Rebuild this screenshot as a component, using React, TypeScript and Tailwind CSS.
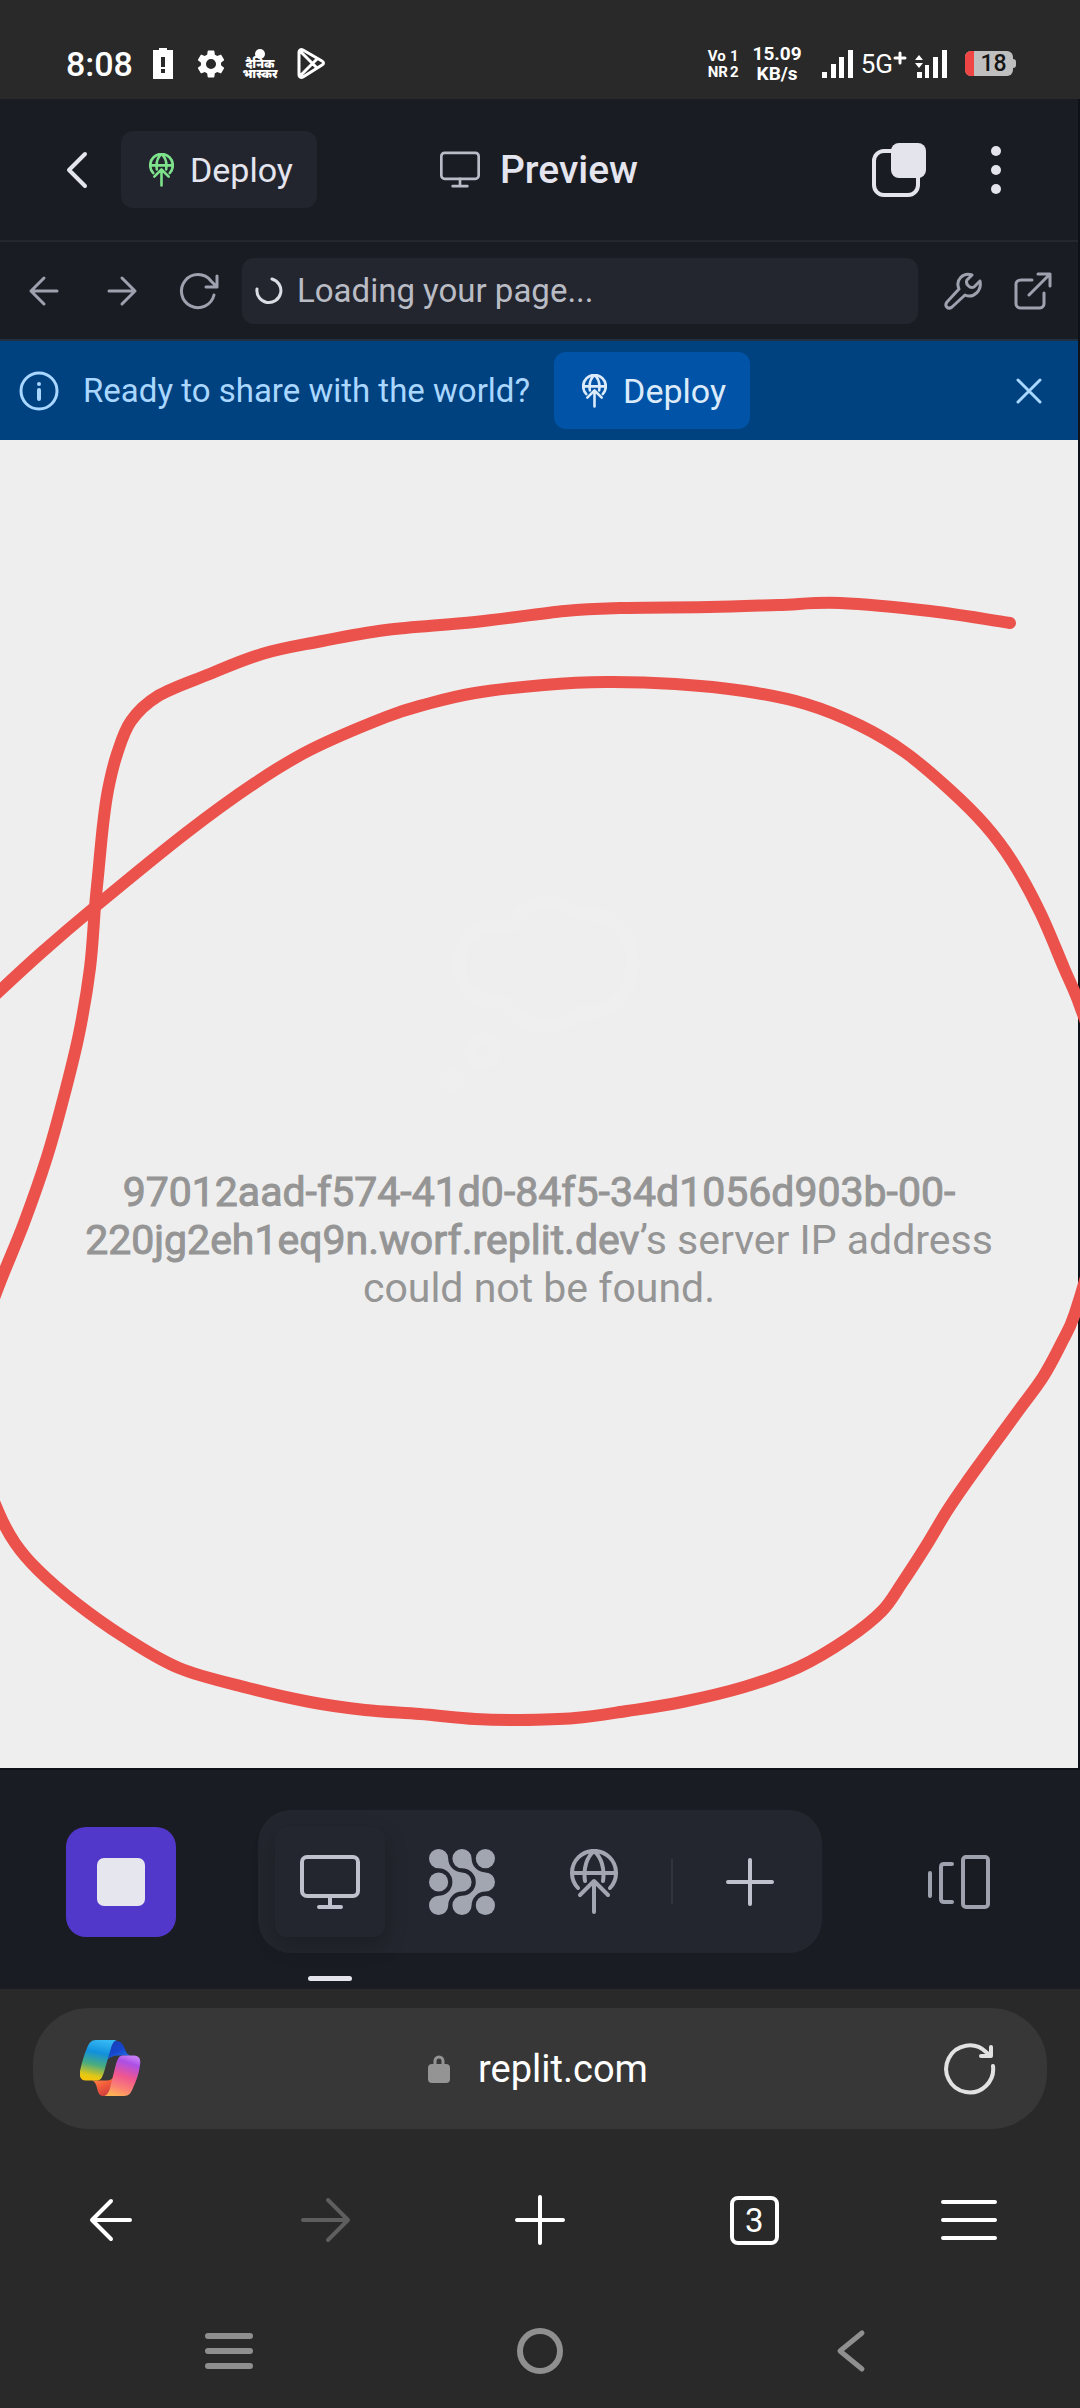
import type { ReactNode, SVGProps } from "react";

type Point = [number, number];

// Hand-drawn annotation, as points in a 1080 x 1328 canvas.
const UPPER_STROKE: Point[] = [
  [1010, 183], [930, 171], [840, 163], [778, 165], [709, 167], [620, 168], [565, 171], [475, 182],
  [386, 190], [317, 202], [262, 214], [207, 235], [158, 256], [131, 281], [117, 314], [108, 350],
  [103, 385], [98, 436], [95, 467], [90, 528], [79, 594], [64, 656], [47, 717], [24, 783], [-4, 853],
  [-30, 930], [-20, 1020], [-2, 1071], [15, 1103], [38, 1130], [76, 1163], [124, 1197], [179, 1228],
  [248, 1248], [310, 1262], [365, 1270], [420, 1274], [475, 1279], [520, 1280], [575, 1278],
  [627, 1271], [682, 1262], [744, 1247], [799, 1227], [847, 1199], [882, 1171], [902, 1143],
  [926, 1106], [947, 1071], [966, 1043], [992, 1007], [1019, 970], [1043, 937], [1061, 904],
  [1075, 873], [1095, 800], [1105, 720], [1096, 620], [1080, 566], [1064, 528], [1040, 472],
  [1012, 421], [985, 385], [950, 350], [906, 313], [861, 286], [806, 264], [744, 251], [675, 244],
  [606, 242], [544, 245], [475, 253], [427, 264], [386, 277], [310, 310], [255, 343], [186, 393],
  [96, 466], [41, 513], [-8, 558],
];

function smoothPath(points: Point[]) {
  let d = `M${points[0][0]} ${points[0][1]}`;
  for (let i = 0; i < points.length - 1; i++) {
    const a = points[Math.max(i - 1, 0)];
    const b = points[i];
    const c = points[i + 1];
    const e = points[Math.min(i + 2, points.length - 1)];
    d += ` C${b[0] + (c[0] - a[0]) / 6} ${b[1] + (c[1] - a[1]) / 6} ${c[0] - (e[0] - b[0]) / 6} ${c[1] - (e[1] - b[1]) / 6} ${c[0]} ${c[1]}`;
  }
  return d;
}

function Line(props: SVGProps<SVGSVGElement>) {
  return <svg aria-hidden="true" fill="none" stroke="currentColor" strokeLinecap="round" strokeLinejoin="round" {...props} />;
}

function DeployGlobe({ className, strokeWidth = 4 }: { className: string; strokeWidth?: number }) {
  return (
    <Line viewBox="0 0 48 66" className={className} strokeWidth={strokeWidth}>
      <path d="M8 39A22 22 0 1 1 40 39M2 24H46M24 2C17 8 13 19 15 32M24 2C31 8 35 19 33 32" />
      <path d="M24 63V32M10 46L24 32L38 46" />
    </Line>
  );
}

function Monitor({ className, strokeWidth = 4 }: { className: string; strokeWidth?: number }) {
  return (
    <Line viewBox="0 0 60 54" className={className} strokeWidth={strokeWidth}>
      <rect x="2" y="2" width="56" height="39" rx="5" />
      <path d="M30 41V52M19 52H41" />
    </Line>
  );
}

function Blobs() {
  const chevron =
    "M9.6 0A9.6 9.6 0 0 1 19.2 9.6A13.8 13.8 0 0 0 33 23.4A9.6 9.6 0 0 1 33 42.6A13.8 13.8 0 0 0 19.2 56.4A9.6 9.6 0 1 1 9.6 46.8A13.8 13.8 0 0 0 9.6 19.2A9.6 9.6 0 0 1 9.6 0Z";
  return (
    <svg aria-hidden="true" viewBox="0 0 66 66" className="size-[66px] fill-[#a1a6b1]">
      <path d={chevron} />
      <path d={chevron} transform="translate(23.4 0)" />
      <circle cx="9.6" cy="33" r="9.6" />
      <circle cx="56.4" cy="9.6" r="9.6" />
      <circle cx="56.4" cy="56.4" r="9.6" />
    </svg>
  );
}

function Copilot() {
  return (
    <svg aria-hidden="true" viewBox="0 0 61 57" className="h-[57px] w-[61px]">
      <defs>
        <linearGradient id="cp-left" x1="0.6" y1="0" x2="0.4" y2="1">
          <stop offset="0" stopColor="#35b8f4" />
          <stop offset="0.32" stopColor="#1191dc" />
          <stop offset="0.62" stopColor="#49ab7f" />
          <stop offset="0.9" stopColor="#e3c716" />
          <stop offset="1" stopColor="#f5c60b" />
        </linearGradient>
        <linearGradient id="cp-fold" x1="0.2" y1="0" x2="0.8" y2="1">
          <stop offset="0" stopColor="#1740b8" />
          <stop offset="0.5" stopColor="#1646cc" />
          <stop offset="1" stopColor="#2277ea" />
        </linearGradient>
        <linearGradient id="cp-right" x1="0.65" y1="0" x2="0.35" y2="1">
          <stop offset="0" stopColor="#c57bf3" />
          <stop offset="0.16" stopColor="#ac4fe6" />
          <stop offset="0.5" stopColor="#f0568f" />
          <stop offset="0.8" stopColor="#fb8472" />
          <stop offset="1" stopColor="#ffb054" />
        </linearGradient>
        <linearGradient id="cp-tail" x1="0" y1="0" x2="0.6" y2="1">
          <stop offset="0" stopColor="#ff9146" />
          <stop offset="0.5" stopColor="#f5603b" />
          <stop offset="1" stopColor="#d03b3f" />
        </linearGradient>
      </defs>
      <path fill="url(#cp-fold)" d="M32 1H36C41 1 43 4 45 9C46 13 48 15 51 15.5H38C34 15.5 31 17 28 19Z" />
      <path fill="url(#cp-tail)" d="M12 40.5H27C30 40.5 32 39 34 37L29 52C28 55 26 56 23 56C19 56 18 52 17 48C16 44 15 41.5 12 40.5Z" />
      <path fill="url(#cp-left)" d="M37 0C33 1 32 5 31 8L24 32C22 38 21 40.5 16 40.5H6C1 40.5 -1 37 0 31C2 22 4 15 7 8C9 3 11 0 16 0Z" />
      <path fill="url(#cp-right)" d="M24 56C28 55 29 51 30 48L36 24C38 18 39 15.5 44 15.5H54C59 15.5 61 19 60 25C59 34 56 41 53 48C51 53 49 56 44 56Z" />
    </svg>
  );
}

function SignalBars() {
  return (
    <svg aria-hidden="true" viewBox="0 0 31 28" className="h-7 w-[31px] fill-white">
      <rect x="0" y="22" width="5" height="6" />
      <rect x="9" y="14" width="5" height="14" />
      <rect x="17" y="7" width="5" height="21" />
      <rect x="26" y="0" width="5" height="28" />
    </svg>
  );
}

function StatusBar() {
  return (
    <div className="flex h-[99px] items-center justify-between bg-[#292929] pt-7 pr-[64px] pl-[66px] text-white">
      <div className="flex items-center">
        <span className="mr-5 text-[34px] leading-10 font-medium">8:08</span>
        <svg aria-hidden="true" viewBox="0 0 20 31" className="mr-6 h-[31px] w-5">
          <path fill="#fff" d="M6 0H14V2H20V31H0V2H6Z" />
          <path fill="#292929" d="M8 9H12V19H8ZM8 21H12V25H8Z" />
        </svg>
        <svg aria-hidden="true" viewBox="2 2 20 20" className="mr-5 size-7 fill-white">
          <path d="M19.14 12.94c.04-.3.06-.61.06-.94 0-.32-.02-.64-.07-.94l2.03-1.58a.49.49 0 0 0 .12-.61l-1.92-3.32a.49.49 0 0 0-.59-.22l-2.39.96c-.5-.38-1.03-.7-1.62-.94l-.36-2.54a.48.48 0 0 0-.48-.41h-3.84c-.24 0-.43.17-.47.41l-.36 2.54c-.59.24-1.13.57-1.62.94l-2.39-.96a.48.48 0 0 0-.59.22L2.74 8.87c-.12.21-.08.47.12.61l2.03 1.58c-.05.3-.09.63-.09.94s.02.64.07.94l-2.03 1.58a.49.49 0 0 0-.12.61l1.92 3.32c.12.22.37.29.59.22l2.39-.96c.5.38 1.03.7 1.62.94l.36 2.54c.05.24.24.41.48.41h3.84c.24 0 .44-.17.47-.41l.36-2.54c.59-.24 1.13-.56 1.62-.94l2.39.96c.22.08.47 0 .59-.22l1.92-3.32a.49.49 0 0 0-.12-.61l-2.01-1.58zM12 15.6a3.6 3.6 0 1 1 0-7.2 3.6 3.6 0 0 1 0 7.2z" />
        </svg>
        <div className="mr-[22px] flex w-[30px] flex-col items-center">
          <span className="size-[10px] rounded-full bg-white" />
          <span className="text-center text-[12px] leading-[10px] font-black whitespace-nowrap" lang="hi">
            दैनिक
            <br />
            भास्कर
          </span>
        </div>
        <Line viewBox="0 0 28 31" className="h-[31px] w-7" strokeWidth="3">
          <path d="M2 4C2 2 4 1 6 2L25 13C27 14 27 16 25 17L6 29C4 30 2 29 2 27ZM3 3L20 20M3 28L20 11" />
        </Line>
      </div>
      <div className="flex items-center font-bold">
        <div className="mr-[14px] grid grid-cols-[auto_auto] items-center gap-x-[2px] text-[15px] leading-4">
          <span>Vo</span>
          <span>1</span>
          <span>NR</span>
          <span>2</span>
        </div>
        <div className="mr-5 text-center text-[19px] leading-5">
          15.09
          <br />
          KB/s
        </div>
        <SignalBars />
        <span className="ml-2 text-[26px] leading-8 font-normal">5G</span>
        <Line viewBox="0 0 14 14" className="mr-2 mb-3 size-[14px]" strokeWidth="3">
          <path d="M7 2V12M2 7H12" />
        </Line>
        <svg aria-hidden="true" viewBox="0 0 32 28" className="h-7 w-8 fill-white">
          <path d="M4 5L8 10H0ZM4 18L8 13H0ZM2 22H7V28H2ZM10 15H14V28H10ZM18 7H23V28H18ZM27 0H32V28H27Z" />
        </svg>
        <div className="ml-[18px] flex h-[25px] w-[48px] items-center overflow-hidden rounded-[6px] bg-[#bfbfbf]">
          <span className="h-full w-[9px] bg-[#f04545]" />
          <span className="flex-1 text-center text-[23px] leading-6 font-medium text-[#151515]">18</span>
        </div>
        <span className="h-[9px] w-[3px] rounded-r-sm bg-[#bfbfbf]" />
      </div>
    </div>
  );
}

function Header() {
  return (
    <header className="grid h-[143px] grid-cols-[1fr_auto_1fr] items-center border-b-2 border-[#242730] bg-[#1a1c24] px-[62px] text-[#e4e5ee]">
      <div className="flex items-center gap-[21px]">
        <button type="button" aria-label="Back" className="flex h-[77px] w-[38px] items-center pl-1">
          <Line viewBox="0 0 22 38" className="h-[38px] w-[22px]" strokeWidth="4">
            <path d="M19 3L3 19L19 35" />
          </Line>
        </button>
        <button type="button" className="flex h-[77px] items-center gap-4 rounded-xl bg-[#23252e] pr-6 pl-7 text-[34px] leading-10">
          <DeployGlobe className="h-[34px] w-[25px] text-[#7ee28c]" strokeWidth={5} />
          Deploy
        </button>
      </div>
      <h1 className="flex items-center gap-5 text-[39px] leading-[48px] font-medium">
        <Monitor className="h-[37px] w-10 text-[#b9bcc6]" strokeWidth={4} />
        Preview
      </h1>
      <div className="flex items-center justify-end gap-[50px]">
        <button type="button" aria-label="Tabs" className="flex">
          <svg aria-hidden="true" viewBox="0 0 54 54" className="size-[54px]">
            <rect x="2" y="8" width="44" height="44" rx="10" fill="none" stroke="#e4e5ec" strokeWidth="4" />
            <rect x="19" y="0" width="35" height="35" rx="8" fill="#e4e5ec" />
          </svg>
        </button>
        <button type="button" aria-label="More" className="flex w-10 justify-center">
          <svg aria-hidden="true" viewBox="0 0 10 50" className="h-[50px] w-[10px] fill-[#e4e5ec]">
            <circle cx="5" cy="6" r="5" />
            <circle cx="5" cy="25" r="5" />
            <circle cx="5" cy="44" r="5" />
          </svg>
        </button>
      </div>
    </header>
  );
}

function AddressRow() {
  return (
    <div className="flex h-[99px] items-center border-b-2 border-[#20303f] bg-[#1a1c24] px-[26px] text-[#9da2ae]">
      <button type="button" aria-label="Previous page" className="mr-[42px] flex">
        <Line viewBox="0 0 36 36" className="size-9" strokeWidth="3">
          <path d="M31 18H5M18 5L5 18L18 31" />
        </Line>
      </button>
      <button type="button" aria-label="Next page" className="mr-[38px] flex">
        <Line viewBox="0 0 36 36" className="size-9" strokeWidth="3">
          <path d="M5 18H31M18 5L31 18L18 31" />
        </Line>
      </button>
      <button type="button" aria-label="Reload" className="mr-[22px] flex">
        <Line viewBox="0 0 42 42" className="size-[42px]" strokeWidth="3">
          <path d="M36 25A16.500 16.500 0 1 1 33 11L39 17M39 6V17H28" />
        </Line>
      </button>
      <label className="flex h-[66px] flex-1 items-center gap-[14px] rounded-xl bg-[#24262f] pl-[13px]">
        <Line viewBox="0 0 28 28" className="size-7 text-[#dcdee6]" strokeWidth="3">
          <path d="M17 2A12 12 0 1 1 2 12" />
        </Line>
        <input
          aria-label="Page address"
          readOnly
          value="Loading your page..."
          className="min-w-0 flex-1 bg-transparent text-[33px] leading-10 text-[#b9bcc4] outline-none"
        />
      </label>
      <button type="button" aria-label="Developer tools" className="mr-8 ml-[26px] flex">
        <Line viewBox="0 0 38 38" className="size-[38px]" strokeWidth="3">
          <path d="M28 3C19 0 11 8 15 17L3 30C0 34 4 38 8 35L21 23C30 27 38 18 36 9L30 15C26 17 21 12 23 8Z" />
        </Line>
      </button>
      <button type="button" aria-label="Open in new tab" className="flex">
        <Line viewBox="0 0 38 38" className="size-[38px]" strokeWidth="3">
          <path d="M18 8H7C4 8 2 10 2 12V32C2 34 4 36 6 36H26C28 36 30 34 30 32V21M15 23L36 2M24 2H36V14" />
        </Line>
      </button>
    </div>
  );
}

function ShareBanner() {
  return (
    <div className="flex h-[99px] items-center bg-[#004180] pr-9 pl-[19px] text-[34px] leading-10 text-[#a9d7ff]">
      <Line viewBox="0 0 40 40" className="mr-6 size-10" strokeWidth="3">
        <circle cx="20" cy="20" r="18" />
        <path d="M20 19V28M20 13V13" strokeWidth="4" />
      </Line>
      <p className="text-[33px]">Ready to share with the world?</p>
      <button type="button" className="ml-6 flex h-[77px] items-center gap-4 rounded-xl bg-[#0053a6] pr-6 pl-7 text-[#dcebfb]">
        <DeployGlobe className="h-[34px] w-[25px]" strokeWidth={5} />
        Deploy
      </button>
      <button type="button" aria-label="Dismiss" className="ml-auto flex">
        <Line viewBox="0 0 26 26" className="size-[26px]" strokeWidth="3">
          <path d="M2 2L24 24M24 2L2 24" />
        </Line>
      </button>
    </div>
  );
}

function PreviewPane() {
  return (
    <main className="relative flex-1 border-b-2 border-[#0f1118] bg-[#eeeeee]">
      <div className="flex flex-col items-center px-16 pt-[455px]">
        <svg aria-hidden="true" viewBox="0 0 200 200" className="h-[200px] w-[200px] fill-none stroke-[#efefef]">
          <path
            strokeWidth="13"
            d="M53 32C9 32 9 106 53 106H60C66 106 66 108 70 113C86 135 121 137 141 118C144 117 148 118 152 118C207 112 207 24 154 20C146 19 141 21 136 18C116 1 87 6 75 27C72 32 71 32 65 32Z"
          />
          <circle cx="44" cy="156" r="12" strokeWidth="12" />
          <circle cx="13" cy="186" r="12" stroke="none" fill="#efefef" />
        </svg>
        <p className="mt-[73px] text-center text-[41px] leading-[48px] text-[#959595]">
          <b className="font-normal [-webkit-text-stroke:1px_#959595]">97012aad-f574-41d0-84f5-34d1056d903b-00-220jg2eh1eq9n.worf.replit.dev</b>
          ’s server IP address could not be found.
        </p>
      </div>
      <div className="pointer-events-none absolute inset-y-0 left-0 -right-[2px] overflow-hidden">
        <svg aria-hidden="true" viewBox="0 0 1080 1328" preserveAspectRatio="none" className="size-full">
          <path d={smoothPath(UPPER_STROKE)} fill="none" stroke="#ec524c" strokeWidth="12" strokeLinecap="round" />
        </svg>
      </div>
    </main>
  );
}

function DockButton({ label, children }: { label: string; children: ReactNode }) {
  return (
    <button type="button" aria-label={label} className="flex size-[110px] items-center justify-center rounded-xl text-[#a1a6b1]">
      {children}
    </button>
  );
}

function Dock() {
  return (
    <nav aria-label="Workspace tools" className="flex h-[219px] items-center justify-between bg-[#1a1c24] px-[66px] pt-1">
      <button type="button" aria-label="Stop" className="flex size-[110px] items-center justify-center rounded-[20px] bg-[#5138cb]">
        <span className="size-12 rounded-[7px] bg-[#e6e7ee]" />
      </button>
      <div className="flex h-[143px] items-center gap-[22px] rounded-[33px] bg-[#24262f] px-[17px]">
        <div className="relative rounded-xl bg-[#24262f] shadow-[0_8px_22px_rgba(0,0,0,0.22)]">
          <DockButton label="Preview">
            <Monitor className="h-[54px] w-[60px] text-[#bfc2cc]" />
          </DockButton>
          <span className="absolute top-[149px] left-[33px] h-[5px] w-11 rounded-full bg-[#e4e5ec]" />
        </div>
        <DockButton label="Integrations">
          <Blobs />
        </DockButton>
        <DockButton label="Deploy">
          <DeployGlobe className="h-[66px] w-12" />
        </DockButton>
        <span className="h-[45px] w-[2px] bg-[#31343f]" />
        <DockButton label="New tab">
          <Line viewBox="0 0 48 48" className="size-12 text-[#bfc2cc]" strokeWidth="4">
            <path d="M24 2V46M2 24H46" />
          </Line>
        </DockButton>
      </div>
      <button type="button" aria-label="Switch tabs" className="flex w-[110px] justify-end pr-6 text-[#9da2ae]">
        <Line viewBox="0 0 62 54" className="h-[54px] w-[62px]" strokeWidth="4">
          <path d="M2 18V41M24 9H16C14 9 13 10 13 12V44C13 46 14 47 16 47H24" />
          <rect x="35" y="2" width="25" height="50" rx="3" />
        </Line>
      </button>
    </nav>
  );
}

function BrowserBar() {
  return (
    <footer className="bg-[#292929] text-white">
      <div className="px-[33px] pt-[19px]">
        <div className="grid h-[121px] grid-cols-[1fr_auto_1fr] items-center rounded-[56px] bg-[#373737] pr-[51px] pl-[47px]">
          <button type="button" aria-label="Copilot" className="flex justify-self-start">
            <Copilot />
          </button>
          <button type="button" className="flex items-center gap-7 text-[38px] leading-[48px]">
            <svg aria-hidden="true" viewBox="0 0 22 28" className="h-7 w-[22px]">
              <rect y="9" width="22" height="19" rx="4" fill="#949494" />
              <path d="M7 10V6A4 4 0 0 1 15 6V10" fill="none" stroke="#949494" strokeWidth="3" />
            </svg>
            replit.com
          </button>
          <button type="button" aria-label="Reload page" className="flex justify-self-end">
            <Line viewBox="0 0 52 52" className="size-[52px] text-[#e2e2e2]" strokeWidth="4">
              <path d="M49 23A23.500 23.500 0 1 1 42 9L46 12M47 4V13H37" />
            </Line>
          </button>
        </div>
      </div>
      <div className="grid h-[182px] grid-cols-5 place-items-center px-1">
        <button type="button" aria-label="Back" className="flex">
          <Line viewBox="0 0 44 44" className="size-11" strokeWidth="4">
            <path d="M41 22H3M22 3L3 22L22 41" />
          </Line>
        </button>
        <button type="button" aria-label="Forward" disabled className="flex text-[#5e5e5e]">
          <Line viewBox="0 0 50 46" className="h-[46px] w-[50px]" strokeWidth="4">
            <path d="M2 23H47M27 3L47 23L27 43" />
          </Line>
        </button>
        <button type="button" aria-label="New tab" className="flex">
          <Line viewBox="0 0 50 50" className="size-[50px]" strokeWidth="4">
            <path d="M25 2V48M2 25H48" />
          </Line>
        </button>
        <button type="button" aria-label="3 open tabs" className="flex size-[49px] items-center justify-center rounded-lg border-4 border-white text-[33px] leading-none">
          3
        </button>
        <button type="button" aria-label="Menu" className="flex">
          <Line viewBox="0 0 56 42" className="h-[42px] w-14" strokeWidth="4">
            <path d="M2 3H54M2 21H54M2 39H54" />
          </Line>
        </button>
      </div>
      <div className="grid h-[97px] grid-cols-3 place-items-center px-[74px] pb-[18px] text-[#8f8f8f]">
        <button type="button" aria-label="Recent apps" className="flex">
          <Line viewBox="0 0 50 38" className="h-[38px] w-[50px]" strokeWidth="6">
            <path d="M4 4H46M4 19H46M4 34H46" />
          </Line>
        </button>
        <button type="button" aria-label="Home" className="flex">
          <Line viewBox="0 0 48 48" className="size-12" strokeWidth="6">
            <circle cx="24" cy="24" r="20" />
          </Line>
        </button>
        <button type="button" aria-label="System back" className="flex">
          <Line viewBox="0 0 30 44" className="h-11 w-[30px]" strokeWidth="5">
            <path d="M26 4L4 22L26 40" />
          </Line>
        </button>
      </div>
    </footer>
  );
}

export default function App() {
  return (
    <div className="flex min-h-screen flex-col bg-[#292929] font-['Roboto','Noto_Sans',sans-serif]">
      <StatusBar />
      <div className="flex flex-1 flex-col border-r-2 border-[#0f1118]">
        <Header />
        <AddressRow />
        <ShareBanner />
        <PreviewPane />
      </div>
      <Dock />
      <BrowserBar />
    </div>
  );
}
